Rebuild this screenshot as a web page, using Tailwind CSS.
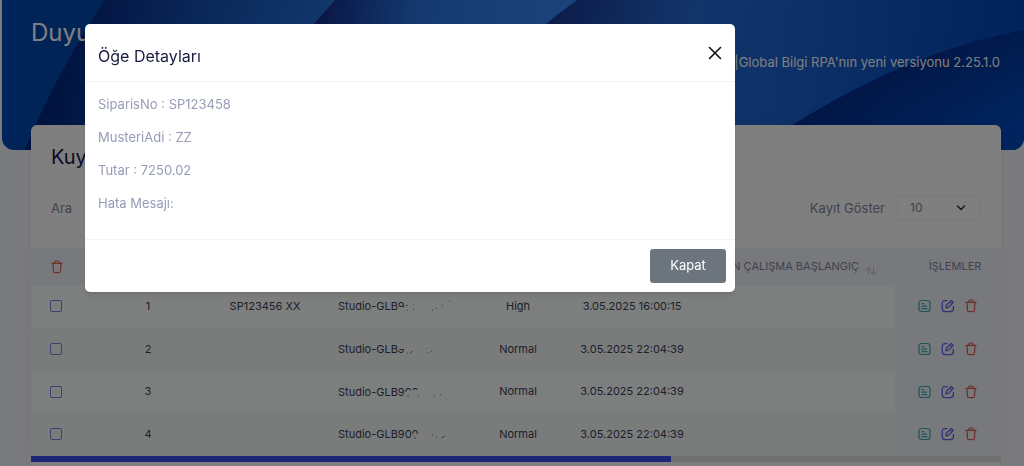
<!DOCTYPE html>
<html lang="tr">
<head>
    <meta charset="UTF-8">
    <meta name="viewport" content="width=device-width, initial-scale=1.0">
    <script src="https://cdn.jsdelivr.net/npm/@tailwindcss/browser@4"></script>
    <title>Kuyruk</title>
</head>

<body class="bg-[#f5f6fc] font-['Inter',sans-serif]">

<!-- icons -->
<svg class="hidden">
    <symbol id="trash" viewBox="0 0 12 14" fill="none" stroke="currentColor" stroke-width="1.2" stroke-linecap="round" stroke-linejoin="round">
        <path d="M1 3.4h10M3.6 3.2l.6-1.7q.2-.5.8-.5h2q.6 0 .8.5l.6 1.7M2 3.6l.5 7.6q.1 1.4 1.5 1.4h4q1.4 0 1.5-1.4L10 3.6"/>
    </symbol>
    <symbol id="detail" viewBox="0 0 13 14" fill="none" stroke="currentColor" stroke-width="1.2" stroke-linecap="round">
        <rect x="1" y="1.5" width="11" height="11" rx="2.6"/>
        <path d="M4 4.7h1.8M4 7.2h4.5M4 9.6h5"/>
    </symbol>
    <symbol id="edit" viewBox="0 0 14 14" fill="none" stroke="currentColor" stroke-width="1.3" stroke-linecap="round" stroke-linejoin="round">
        <path d="M6 1.6H4.3Q1.2 1.6 1.2 4.7v4.8q0 3.1 3.1 3.1h5q3.1 0 3.1-3.1V7.5"/>
        <path d="M10.3 1.4l2 2-4.5 4.700-2.900.8.7-2.900zM9 2.900l2 2"/>
    </symbol>
    <symbol id="sort" viewBox="0 0 12 10" fill="none" stroke="currentColor" stroke-width="1" stroke-linecap="round" stroke-linejoin="round">
        <path d="M3.5 8V1.5M1 4l2.5-2.5L6 4M8.5 2v6.5M6 6l2.5 2.5L11 6"/>
    </symbol>
</svg>

<div class="pl-[2px]">
    <header class="relative h-[150px] overflow-hidden rounded-b-xl">
        <svg class="absolute inset-0 h-full w-full" viewBox="2 0 1022 150" preserveAspectRatio="none">
            <defs>
                <linearGradient id="g1" x1="0" y1="0" x2="1" y2="0">
                    <stop offset="0" stop-color="#0048b4"/><stop offset="1" stop-color="#0448a4"/>
                </linearGradient>
                <linearGradient id="g2" gradientUnits="userSpaceOnUse" x1="60" y1="40" x2="310" y2="110">
                    <stop offset="0" stop-color="#02247c"/><stop offset=".5" stop-color="#1450b4"/><stop offset="1" stop-color="#2470d8"/>
                </linearGradient>
                <linearGradient id="g3" gradientUnits="userSpaceOnUse" x1="325" y1="0" x2="560" y2="30">
                    <stop offset="0" stop-color="#143090"/><stop offset=".4" stop-color="#2a74e0"/><stop offset="1" stop-color="#3686f6"/>
                </linearGradient>
                <linearGradient id="g4" gradientUnits="userSpaceOnUse" x1="560" y1="0" x2="1024" y2="60">
                    <stop offset="0" stop-color="#1a3c98"/><stop offset=".3" stop-color="#246cd8"/><stop offset="1" stop-color="#0046b8"/>
                </linearGradient>
                <linearGradient id="g5" gradientUnits="userSpaceOnUse" x1="880" y1="50" x2="940" y2="160">
                    <stop offset="0" stop-color="#042884"/><stop offset="1" stop-color="#0048bc"/>
                </linearGradient>
            </defs>
            <path fill="url(#g1)" d="M0 0h200v150H0z"/>
            <path fill="url(#g2)" d="M105 0Q55 75 25 150H400V0z"/>
            <path fill="url(#g3)" d="M335 0Q270 70 230 150H650V0z"/>
            <path fill="url(#g4)" d="M577 0Q480 70 440 150H1024V0z"/>
            <path fill="url(#g5)" d="M755 150Q890 55 1024 30V150z"/>
        </svg>
        <div class="relative flex items-start justify-between pt-4 pr-6 pl-[29px] text-white">
            <h1 class="text-2xl leading-[34px]">Duyu</h1>
            <p class="flex pt-9 text-[13px] leading-5"><span>|</span><span>Global Bilgi RPA'nın yeni versiyonu 2.25.1.0</span></p>
        </div>
    </header>

    <main class="relative -mt-[25px] mr-[23px] ml-[29px] rounded-md bg-white shadow-[0_0_20px_rgba(60,60,130,0.06)]">
        <h2 class="px-5 pt-5 text-xl leading-6 text-[#181848]">Kuy</h2>
        <div class="flex items-center justify-between px-5 pt-[26px] pb-[27px] text-[13px] text-[#82869d]">
            <label for="search" class="pt-0.5">Ara</label>
            <input id="search" type="text" class="ml-4 h-[26px] w-40 rounded border border-[#eceef6]">
            <div class="ml-auto flex items-center gap-3">
                <label for="length" class="pt-0.5">Kayıt Göster</label>
                <div class="relative">
                    <select id="length" class="h-[26px] w-[84px] appearance-none rounded border border-[#eceef6] pl-3 text-xs">
                        <option>10</option>
                    </select>
                    <svg class="pointer-events-none absolute top-2 right-3.5 h-2.5 w-3" viewBox="0 0 12 10" fill="none" stroke="#333" stroke-width="1.5" stroke-linecap="round" stroke-linejoin="round"><path d="M2.5 3l3.5 3.5L9.5 3"/></svg>
                </div>
            </div>
        </div>

        <table class="w-full table-fixed text-center text-[11px] text-[#3c3e58]">
            <colgroup>
                <col class="w-[50px]"><col class="w-[134px]"><col class="w-[100px]"><col class="w-[160px]">
                <col class="w-[86px]"><col class="w-[142px]"><col><col class="w-[106px]">
            </colgroup>
            <thead>
            <tr class="h-[37px] bg-[#f1f3fa] text-[#82849c]">
                <th class="pl-5"><button class="block text-[#e0604f]" aria-label="Sil"><svg class="h-3.5 w-3"><use href="#trash"/></svg></button></th>
                <th></th><th></th><th></th><th></th><th></th>
                <th class="pr-[18px] font-normal">
                    <div class="flex items-center justify-end gap-1.5 whitespace-nowrap">N ÇALIŞMA BAŞLANGIÇ <svg class="mt-2 h-2.5 w-3 text-[#c0c2d0]"><use href="#sort"/></svg></div>
                </th>
                <th class="pl-3.5 font-normal">İŞLEMLER</th>
            </tr>
            </thead>
            <tbody id="rows"></tbody>
        </table>
        <div class="h-1.5 bg-[#e0e0e2]"><div class="h-full w-[66%] bg-[#3a4bec]"></div></div>
        <div class="h-1"></div>
    </main>
</div>

<div class="fixed inset-0 bg-black/50"></div>

<div role="dialog" aria-labelledby="dialog-title" class="fixed top-6 left-[85px] w-[650px] rounded-[5px] bg-white shadow-md">
    <div class="flex items-start justify-between border-b border-[#f3f3f5] pr-3 pb-[13px] pl-[13px]">
        <h3 id="dialog-title" class="pt-5 text-base leading-6 text-[#181c3e]">Öğe Detayları</h3>
        <button class="pt-[21px] text-[#111]" aria-label="Kapat"><svg class="h-4 w-4" viewBox="0 0 16 16" stroke="currentColor" stroke-width="1.6" stroke-linecap="round"><path d="M2.5 2.5l11 11M13.5 2.5l-11 11"/></svg></button>
    </div>
    <div class="space-y-[13px] px-[13px] pt-3 pb-[26px] text-[13px] leading-5 text-[#969cb5]">
        <p>SiparisNo : SP123458</p>
        <p>MusteriAdi : ZZ</p>
        <p>Tutar : 7250.02</p>
        <p>Hata Mesajı:</p>
    </div>
    <div class="flex justify-end border-t border-[#f3f3f5] px-[9px] py-[9px]">
        <button class="h-[34px] w-[76px] rounded-[3px] bg-[#6c757d] text-[13px] text-white">Kapat</button>
    </div>
</div>

<script>
    // mask: erased part of the machine name, drawn over the text in the row colour
    const rows = [
        {ref: "SP123456 XX", name: "Studio-GLB9", priority: "High", date: "3.05.2025 16:00:15",
            mask: "M60 11L76 9V17H60z", marks: "M68 9l2-1M69 13h1M75 8h1M75 12h1M94 13h1M98 12l1-1M104 9l1-1M111 4.5l1-.5"},
        {ref: "", name: "Studio-GLB9", priority: "Normal", date: "3.05.2025 22:04:39",
            mask: "M60 0H80V9H60z", marks: "M69 13h1M72 13l3-2M88 8v.5M90 12.5h1M93 11.5h1"},
        {ref: "", name: "Studio-GLB900", priority: "Normal", date: "3.05.2025 22:04:39",
            mask: "M67 9L74 7H84V18H67z", marks: "M69 13h2M80 13h1M96 13h1M102 12l1-.5"},
        {ref: "", name: "Studio-GLB900", priority: "Normal", date: "3.05.2025 22:04:39",
            mask: "M74 9H90V18H74z", marks: "M76 13h2M94 10h1M98 12h1M103 13l4-2"}
    ];
    document.getElementById("rows").innerHTML = rows.map(function (row, i) {
        const odd = i % 2 === 0;
        return `
        <tr class="border-b border-[#eef0f3] ${odd ? "h-[43px] bg-[#fafefd]" : "h-[42px] bg-[#f4f8f7]"}">
            <td class="pl-[19px]"><input type="checkbox" aria-label="Satır ${i + 1}" class="block h-3 w-3 appearance-none rounded-[2px] border border-[#7880e0]"></td>
            <td>${i + 1}</td>
            <td>${row.ref}</td>
            <td class="pl-[23px] text-left">
                <div class="relative leading-[18px]">${row.name}
                    <svg class="absolute top-0 left-0 h-[18px] w-[130px]" viewBox="0 0 130 18" fill="none">
                        <path d="${row.mask}" fill="${odd ? "#fafefd" : "#f4f8f7"}"/>
                        <path d="${row.marks}" stroke="#3c3e58" stroke-opacity=".6"/>
                    </svg>
                </div>
            </td>
            <td>${row.priority}</td>
            <td>${row.date}</td>
            <td></td>
            <td class="bg-[#f1f3fa]">
                <div class="flex items-center gap-2.5 pl-[23px]">
                    <button class="text-[#38aeaa]" aria-label="Detay"><svg class="h-3.5 w-[13px]"><use href="#detail"/></svg></button>
                    <button class="text-[#6268e4]" aria-label="Düzenle"><svg class="h-3.5 w-3.5"><use href="#edit"/></svg></button>
                    <button class="text-[#dc5a4c]" aria-label="Sil"><svg class="h-3.5 w-3"><use href="#trash"/></svg></button>
                </div>
            </td>
        </tr>`;
    }).join("");
</script>
</body>
</html>
